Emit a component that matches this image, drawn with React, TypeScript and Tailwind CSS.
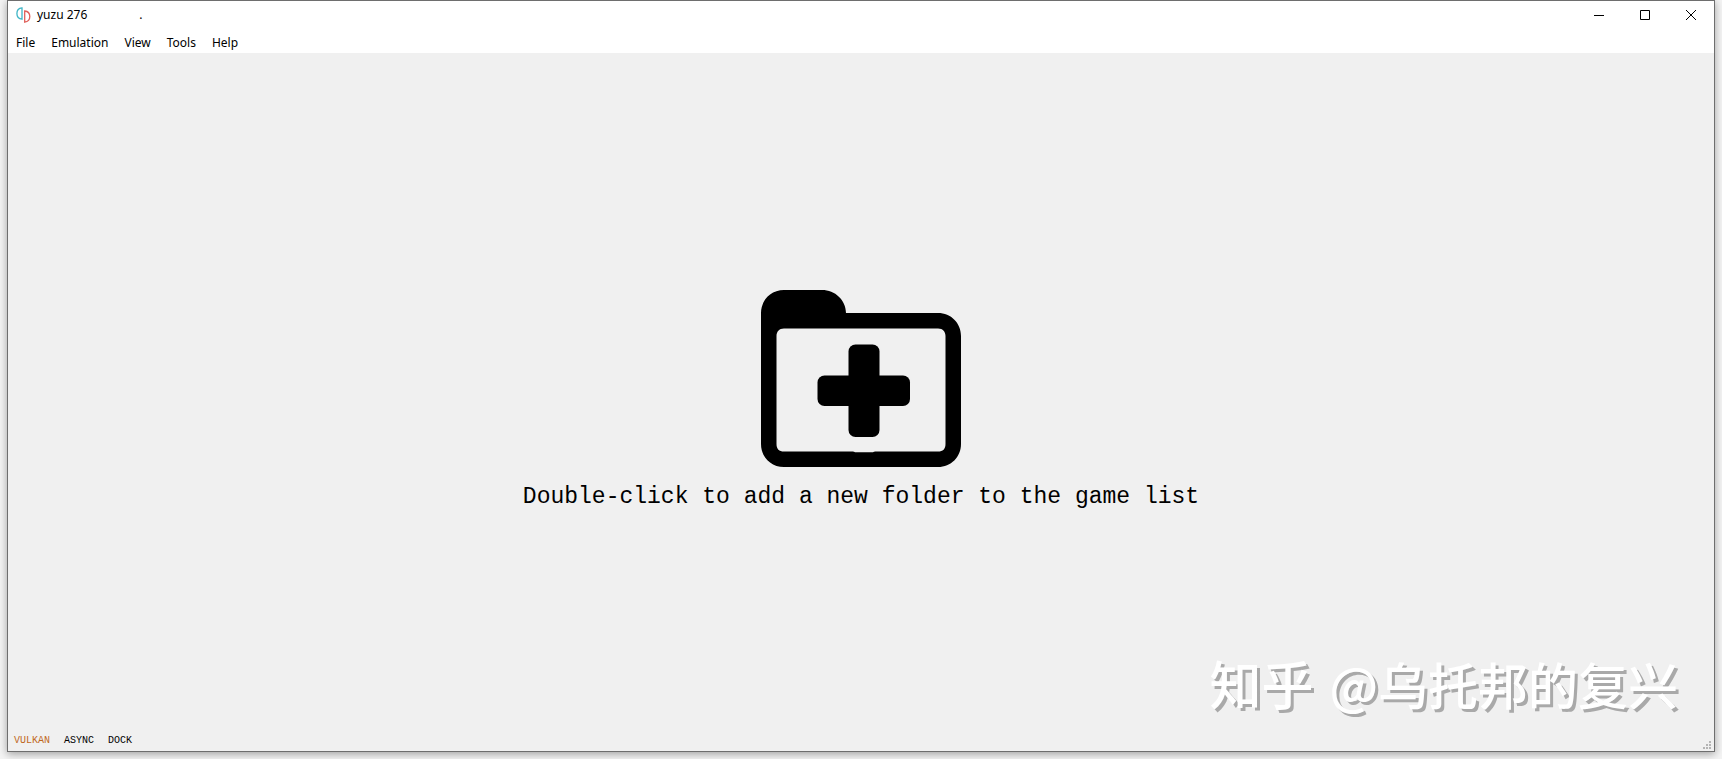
const menus = ["File", "Emulation", "View", "Tools", "Help"]

function Logo() {
  return (
    <svg viewBox="0 0 15 16" className="w-[15px] h-4" fill="none" strokeWidth="1.3">
      <path d="M6 0.9 V12.2 C2.8 11.8 0.9 9.5 0.9 6.5 C0.9 3.5 2.8 1.2 6 0.9 Z" stroke="#3fb5c6" />
      <path d="M8.7 4 V15.2 C12 14.8 13.8 12.6 13.8 9.6 C13.8 6.6 12 4.3 8.7 4 Z" stroke="#e0605a" />
    </svg>
  )
}

function FolderIcon() {
  return (
    <svg viewBox="0 0 200 200" className="w-[200px] h-[200px]">
      <path
        fillRule="evenodd"
        d="M23 11 H61 C74 11 85 21 85 34 H177 C190 34 200 44 200 57 V165 C200 178 190 188 177 188 H23 C10 188 0 178 0 165 V34 C0 21 10 11 23 11 Z M23 49.5 C18 49.5 15.5 53 15.5 57 V165 C15.5 170 18 172.5 23 172.5 H177 C182 172.5 184.5 170 184.5 165 V57 C184.5 53 182 49.5 177 49.5 Z"
      />
      <rect x="87.5" y="65.5" width="31" height="92.5" rx="7" />
      <rect x="56.5" y="96.5" width="92.5" height="30.5" rx="7" />
      <path d="M92 172 H114 L112 173.3 H94 Z" fill="#f0f0f0" />
    </svg>
  )
}

function WindowControls() {
  return (
    <div className="flex">
      <button aria-label="Minimize" className="w-[46px] h-7 flex items-center justify-center">
        <svg viewBox="0 0 10 10" className="w-[10px] h-[10px]" stroke="#000" fill="none">
          <path d="M0 5.5 H10" />
        </svg>
      </button>
      <button aria-label="Maximize" className="w-[46px] h-7 flex items-center justify-center">
        <svg viewBox="0 0 10 10" className="w-[10px] h-[10px]" stroke="#000" fill="none">
          <path d="M0.5 0.5 H9.5 V9.5 H0.5 Z" />
        </svg>
      </button>
      <button aria-label="Close" className="w-[46px] h-7 flex items-center justify-center">
        <svg viewBox="0 0 10 10" className="w-[10px] h-[10px]" stroke="#000" fill="none">
          <path d="M0 0 L10 10 M10 0 L0 10" />
        </svg>
      </button>
    </div>
  )
}

export default function App() {
  return (
    <div className="min-h-screen flex flex-col px-[7px] pb-[7px] bg-[#f4f4f4] text-black overflow-hidden">
      <div className="relative flex-1 flex flex-col border border-[#6e6e6e] bg-[#f0f0f0] shadow-[0_2px_8px_rgba(0,0,0,0.35)]">
        <header className="bg-white font-['Noto_Sans','Open_Sans',sans-serif] text-[12px] leading-4">
          <div className="flex items-center justify-between h-7">
            <div className="flex items-center gap-1.5 pl-2">
              <Logo />
              <h1>yuzu 276</h1>
              <span className="pl-[46px]">.</span>
            </div>
            <WindowControls />
          </div>
          <nav className="flex h-6 pt-1">
            {menus.map((m) => (
              <button key={m} className="px-2">
                {m}
              </button>
            ))}
          </nav>
        </header>

        <main className="flex-1 flex items-center justify-center pt-[10px]">
          <button className="flex flex-col items-center">
            <FolderIcon />
            <span className="font-['Liberation_Mono',monospace] text-[23px] leading-9">
              Double-click to add a new folder to the game list
            </span>
          </button>
        </main>

        <footer className="flex items-center h-5 px-1.5 gap-[14px] font-['Liberation_Mono',monospace] text-[10px] leading-3">
          <button className="text-[#c0681c]">VULKAN</button>
          <button>ASYNC</button>
          <button>DOCK</button>
        </footer>

        <svg viewBox="0 0 8 8" className="absolute right-[3px] bottom-[2px] w-2 h-2" fill="#b4b4b4">
          <path d="M6 0h2v2H6z M3 3h2v2H3z M6 3h2v2H6z M0 6h2v2H0z M3 6h2v2H3z M6 6h2v2H6z" />
        </svg>
        <p className="absolute right-9 bottom-[38px] flex items-baseline gap-4 font-['Noto_Sans_CJK_SC',sans-serif] font-medium text-[50px] leading-[60px] text-white [text-shadow:3px_3px_0_#a9a9a9]">
          <span className="text-[52px]">知乎</span>
          <span>@乌托邦的复兴</span>
        </p>
      </div>
    </div>
  )
}
